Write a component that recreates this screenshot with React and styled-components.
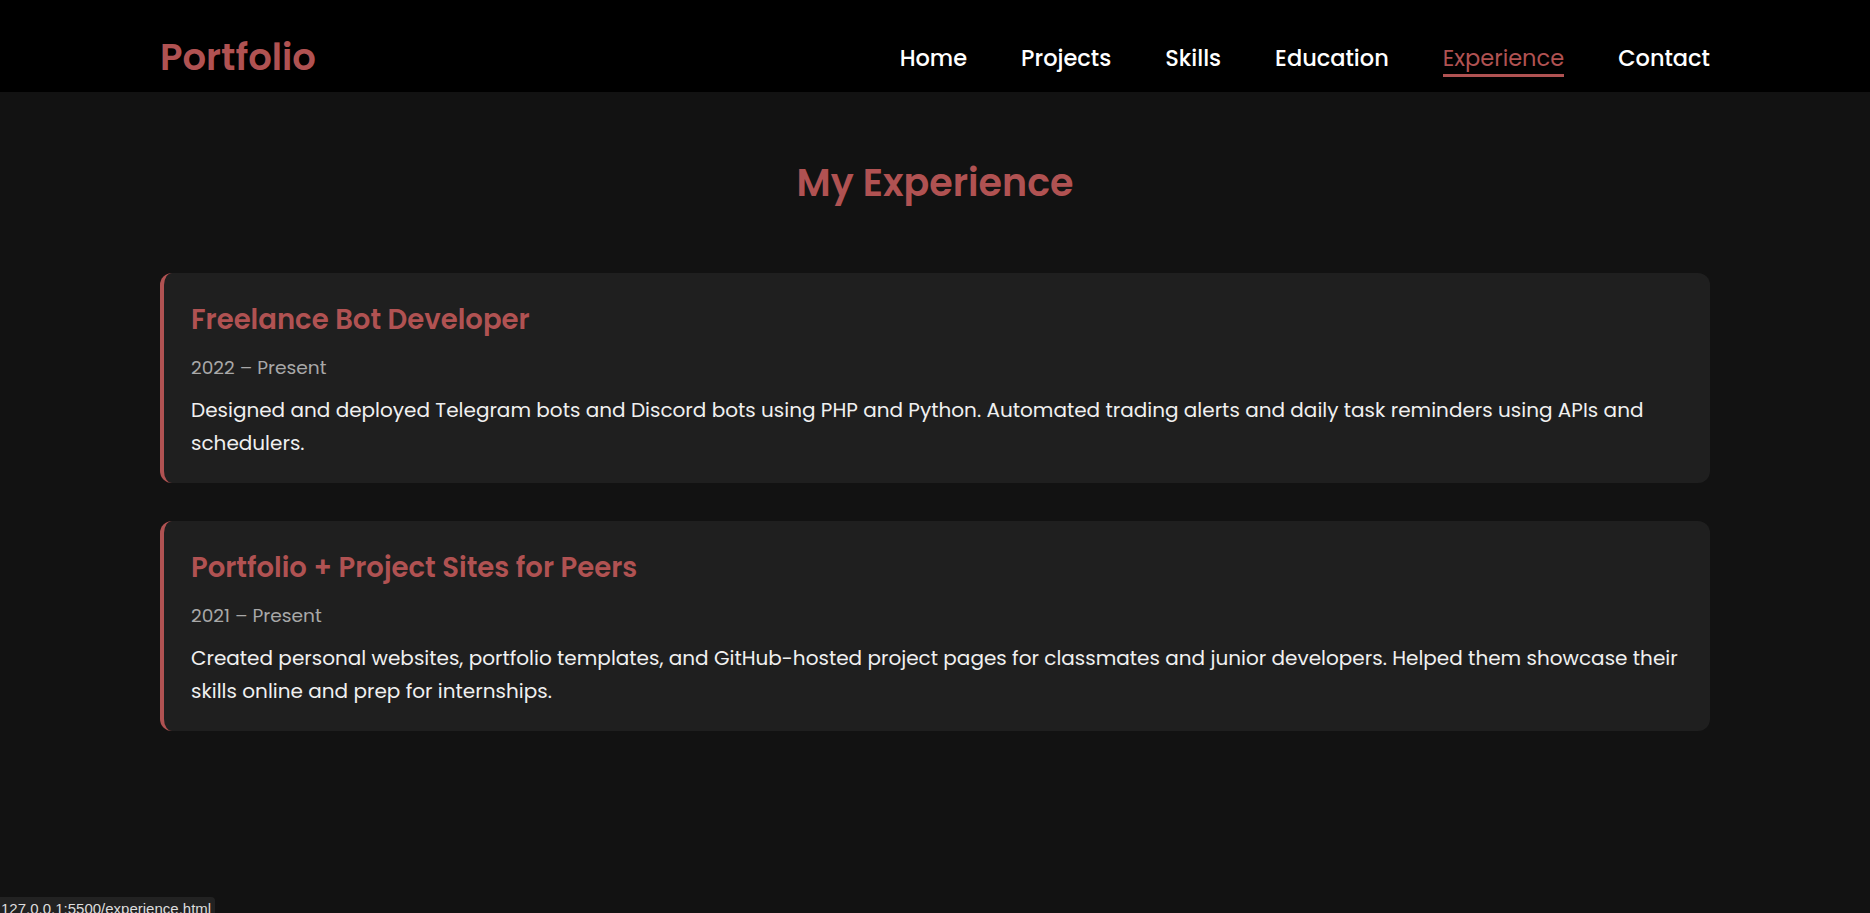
import React from 'react';
import styled, { createGlobalStyle } from 'styled-components';

const accent = '#b05252';

const GlobalStyle = createGlobalStyle`
  * { box-sizing: border-box; }
  body {
    margin: 0;
    background: #121212;
    color: #eee;
    font-family: 'Poppins', 'Open Sans', sans-serif;
  }
`;

const Header = styled.header`
  background: #000;
  height: 92px;
`;

const Container = styled.div`
  max-width: 1550px;
  margin: 0 auto;
`;

const HeaderInner = styled(Container)`
  height: 100%;
  padding-top: 23px;
  display: flex;
  align-items: center;
  justify-content: space-between;
`;

const Logo = styled.div`
  color: ${accent};
  font-size: 37px;
  font-weight: 600;
  line-height: 1.2;
`;

const Nav = styled.nav`
  display: flex;
  gap: 54px;
  padding-top: 4px;
`;

const NavLink = styled.a`
  color: ${p => (p.$active ? accent : '#fff')};
  font-weight: ${p => (p.$active ? 400 : 500)};
  font-size: 22.5px;
  line-height: 32px;
  text-decoration: none;
  border-bottom: 3px solid ${p => (p.$active ? accent : 'transparent')};
  cursor: pointer;
`;

const Main = styled(Container)`
  padding: 68px 0 60px;
`;

const PageTitle = styled.h1`
  margin: 0 0 67px;
  text-align: center;
  color: ${accent};
  font-size: 38px;
  font-weight: 600;
  line-height: 1.2;
`;

const List = styled.div`
  display: flex;
  flex-direction: column;
  gap: 38px;
`;

const Card = styled.div`
  background: #1f1f1f;
  border-left: 4px solid ${accent};
  border-radius: 12px;
  padding: 28px 27px 23px;
`;

const CardTitle = styled.h3`
  margin: 0 0 15px;
  color: ${accent};
  font-size: 27.5px;
  font-weight: 600;
  line-height: 38px;
`;

const Period = styled.div`
  color: #a8a8a8;
  font-size: 18.6px;
  line-height: 28px;
  margin-bottom: 12px;
`;

const Desc = styled.p`
  margin: 0;
  color: #f0f0f0;
  font-size: 20px;
  line-height: 33px;
`;

const StatusBar = styled.div`
  position: fixed;
  left: 0;
  bottom: -8px;
  background: #222;
  color: #ddd;
  font-family: 'Liberation Sans', sans-serif;
  font-size: 15px;
  padding: 0 4px 0 1px;
  height: 24px;
  line-height: 24px;
  border-top-right-radius: 4px;
  white-space: nowrap;
`;

const links = ['Home', 'Projects', 'Skills', 'Education', 'Experience', 'Contact'];

const jobs = [
  {
    title: 'Freelance Bot Developer',
    period: '2022 – Present',
    desc: 'Designed and deployed Telegram bots and Discord bots using PHP and Python. Automated trading alerts and daily task reminders using APIs and schedulers.',
  },
  {
    title: 'Portfolio + Project Sites for Peers',
    period: '2021 – Present',
    desc: 'Created personal websites, portfolio templates, and GitHub-hosted project pages for classmates and junior developers. Helped them showcase their skills online and prep for internships.',
  },
];

export default function App() {
  return (
    <>
      <GlobalStyle />
      <Header>
        <HeaderInner>
          <Logo>Portfolio</Logo>
          <Nav>
            {links.map(l => (
              <NavLink key={l} $active={l === 'Experience'}>{l}</NavLink>
            ))}
          </Nav>
        </HeaderInner>
      </Header>
      <Main as="main">
        <PageTitle>My Experience</PageTitle>
        <List>
          {jobs.map(j => (
            <Card key={j.title}>
              <CardTitle>{j.title}</CardTitle>
              <Period>{j.period}</Period>
              <Desc>{j.desc}</Desc>
            </Card>
          ))}
        </List>
      </Main>
      <StatusBar>127.0.0.1:5500/experience.html</StatusBar>
    </>
  );
}
